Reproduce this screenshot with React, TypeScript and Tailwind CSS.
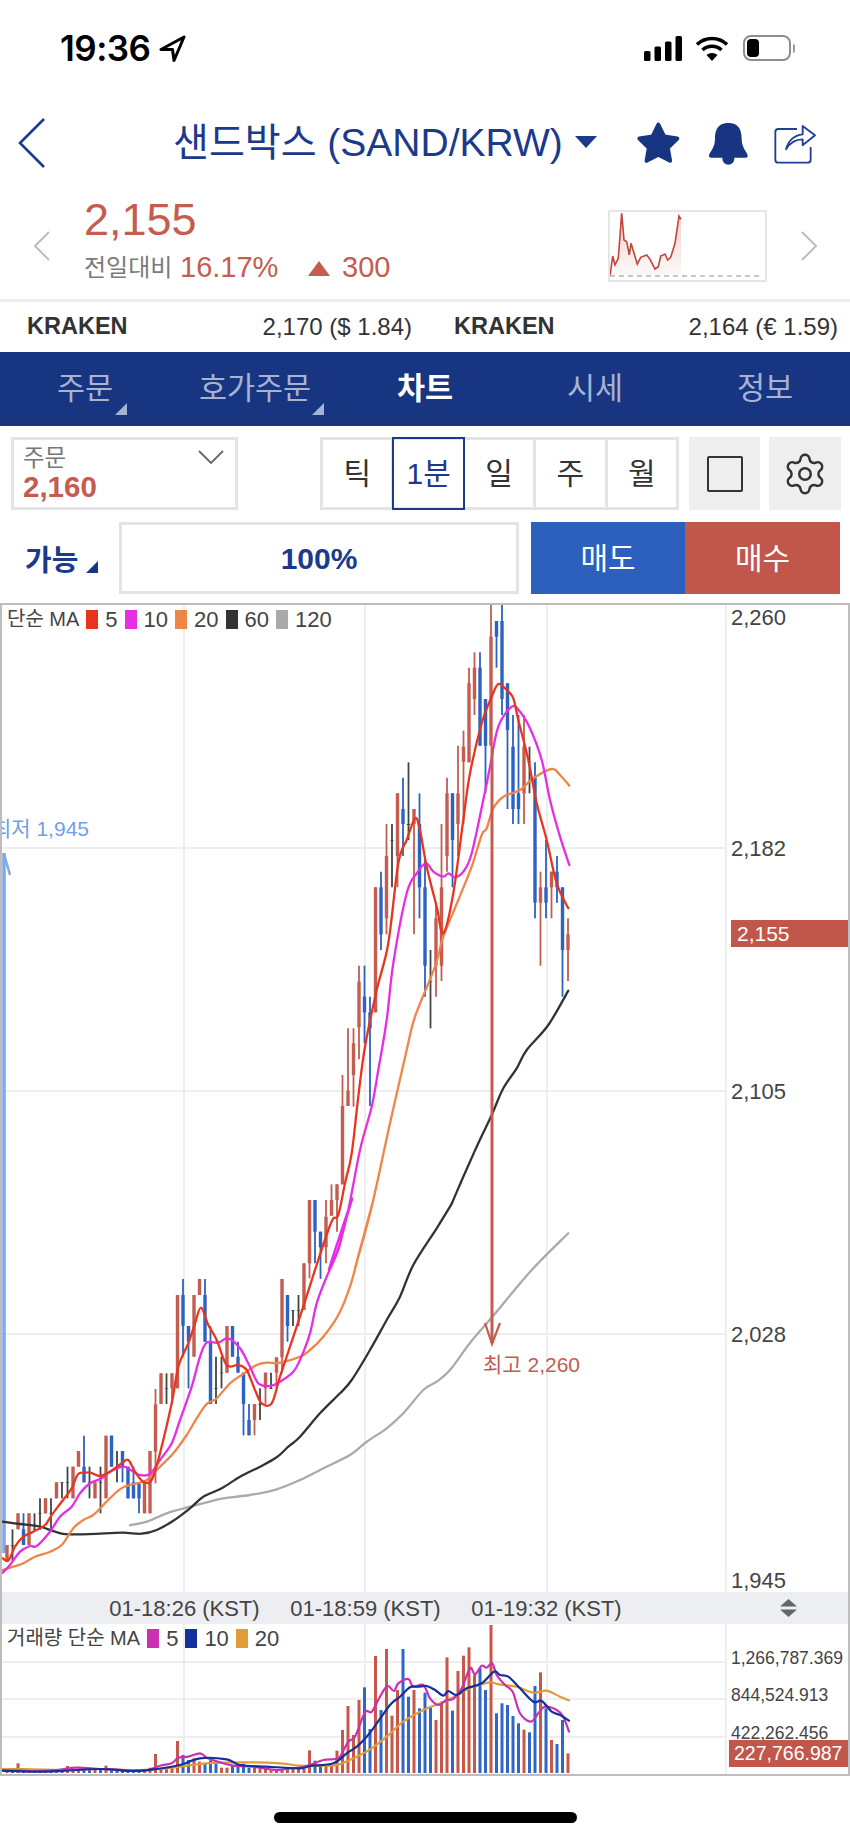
import { Settings } from "lucide-react";

// traced points: "x,y" read off a 3x crop whose corner sits at (ox, oy)
const trace = (ox: number, oy: number, pts: string) =>
  pts
    .split(" ")
    .map((p) => {
      const [x, y] = p.split(",").map(Number);
      return `${(ox + x / 3).toFixed(1)},${(oy + y / 3).toFixed(1)}`;
    })
    .join(" ");

// catmull-rom through the traced points, so the averages read as curves
const smooth = (pts: string) => {
  const p = pts.split(" ").map((s) => s.split(",").map(Number));
  let d = `M${p[0][0]} ${p[0][1]}`;
  for (let i = 0; i < p.length - 1; i++) {
    const a = p[Math.max(i - 1, 0)];
    const b = p[i];
    const c = p[i + 1];
    const e = p[Math.min(i + 2, p.length - 1)];
    const c1x = b[0] + (c[0] - a[0]) / 6;
    const c1y = b[1] + (c[1] - a[1]) / 6;
    const c2x = c[0] - (e[0] - b[0]) / 6;
    const c2y = c[1] - (e[1] - b[1]) / 6;
    d += `C${c1x.toFixed(1)} ${c1y.toFixed(1)} ${c2x.toFixed(1)} ${c2y.toFixed(1)} ${c[0]} ${c[1]}`;
  }
  return d;
};

const RED = "#c45c4f";
const BLUE = "#2d61c2";
const candleColor: Record<string, string> = { r: RED, b: BLUE, k: "#444444" };

// type, wick top, body top, body bottom, wick bottom; newest candle first, y = 600 + v / 3
const candles: [string, number, number, number, number][] = [
  ["r", 955, 1003, 1050, 1143], ["b", 862, 862, 1050, 1190], ["b", 768, 815, 862, 908], ["r", 815, 815, 862, 955],
  ["b", 720, 862, 908, 955], ["r", 815, 862, 908, 1097], ["b", 487, 533, 908, 955], ["k", 440, 485, 487, 580],
  ["r", 345, 440, 580, 672], ["b", 345, 580, 627, 672], ["b", 345, 440, 627, 672], ["b", 250, 250, 390, 627],
  ["b", 15, 63, 297, 345], ["b", 63, 63, 110, 203], ["r", 15, 110, 437, 437], ["b", 297, 297, 437, 580],
  ["b", 157, 203, 437, 437], ["r", 157, 203, 297, 345], ["r", 203, 250, 487, 487], ["r", 392, 440, 485, 672],
  ["r", 437, 580, 672, 768], ["b", 580, 580, 720, 862], ["r", 533, 580, 768, 815], ["r", 672, 862, 1097, 1143],
  ["r", 908, 955, 1097, 1190], ["k", 1050, 1143, 1145, 1285], ["b", 768, 862, 1097, 1190], ["b", 580, 672, 862, 955],
  ["r", 627, 627, 672, 1003], ["k", 487, 672, 675, 720], ["b", 533, 627, 672, 768], ["r", 580, 580, 768, 862],
  ["k", 672, 720, 722, 862], ["r", 672, 768, 955, 1003], ["b", 815, 862, 1003, 1050], ["r", 862, 862, 1237, 1237],
  ["b", 1190, 1237, 1285, 1518], ["b", 1097, 1190, 1237, 1330], ["r", 1097, 1145, 1282, 1378], ["r", 1285, 1330, 1425, 1520],
  ["r", 1285, 1472, 1518, 1518], ["r", 1425, 1518, 1753, 1753], ["r", 1753, 1753, 1800, 1895], ["r", 1753, 1800, 1847, 1847],
  ["r", 1800, 1850, 1942, 1990], ["b", 1895, 1895, 1942, 2037], ["b", 1800, 1800, 1895, 1990], ["r", 1800, 1800, 1990, 2035],
  ["r", 1990, 1990, 2130, 2130], ["k", 2085, 2130, 2132, 2178], ["k", 2130, 2130, 2132, 2178], ["b", 2085, 2085, 2178, 2225],
  ["r", 2037, 2037, 2272, 2318], ["r", 2272, 2272, 2318, 2365], ["k", 2318, 2365, 2367, 2367], ["r", 2318, 2318, 2365, 2412],
  ["k", 2365, 2412, 2414, 2460], ["r", 2412, 2412, 2460, 2506], ["b", 2412, 2460, 2506, 2506], ["b", 2318, 2318, 2412, 2506],
  ["b", 2225, 2270, 2318, 2318], ["b", 2178, 2178, 2270, 2270], ["r", 2178, 2178, 2318, 2318], ["k", 2270, 2318, 2320, 2365],
  ["k", 2270, 2365, 2367, 2412], ["b", 2178, 2225, 2412, 2412], ["b", 2037, 2085, 2225, 2225], ["r", 2037, 2037, 2085, 2085],
  ["r", 2085, 2085, 2270, 2270], ["b", 2178, 2178, 2225, 2365], ["b", 2037, 2085, 2177, 2270], ["r", 2085, 2085, 2365, 2365],
  ["r", 2320, 2320, 2365, 2412], ["k", 2320, 2365, 2367, 2412], ["r", 2320, 2320, 2412, 2412], ["r", 2367, 2413, 2555, 2650],
  ["r", 2553, 2553, 2740, 2740], ["r", 2647, 2647, 2740, 2740], ["b", 2647, 2647, 2695, 2740], ["b", 2600, 2647, 2695, 2695],
  ["b", 2600, 2600, 2695, 2695], ["b", 2553, 2553, 2600, 2647], ["k", 2553, 2600, 2602, 2647], ["b", 2507, 2507, 2600, 2600],
  ["r", 2507, 2507, 2695, 2695], ["k", 2600, 2647, 2649, 2740], ["r", 2647, 2647, 2695, 2695], ["k", 2600, 2647, 2649, 2695],
  ["b", 2507, 2600, 2647, 2647], ["r", 2553, 2553, 2600, 2600], ["r", 2600, 2600, 2695, 2695], ["k", 2600, 2647, 2649, 2695],
  ["k", 2647, 2647, 2649, 2695], ["r", 2647, 2647, 2695, 2695], ["k", 2695, 2740, 2742, 2790], ["r", 2695, 2695, 2740, 2740],
  ["k", 2695, 2740, 2742, 2790], ["k", 2740, 2788, 2790, 2790], ["r", 2740, 2740, 2835, 2835], ["b", 2740, 2788, 2835, 2835],
  ["r", 2740, 2740, 2788, 2788], ["k", 2788, 2835, 2837, 2882], ["r", 2835, 2835, 2882, 2882],
];

const volColors =
  "rbbrbrbbrbbbbbrbbrrrrbrrrbbbrbbrrrbrbbrrrrrrrbbrrrr" + "rrrrrrrbbbbrrbbbrrbbrrrrrrrbbbbbbrbrbbrrrbrbrbbrbrbr";
const volTops = [
  385, 285, 357, 345, 250, 142, 183, 322, 314, 295, 273, 240, 235, 265, 0, 195, 130, 150, 67, 92, 138, 257, 97, 230, 285,
  248, 203, 250, 195, 215, 72, 195, 272, 72, 255, 93, 312, 187, 225, 330, 243, 315, 377, 420, 420, 420, 407, 376, 432, 432,
  432, 430, 432, 435, 436, 430, 428, 428, 428, 416, 425, 420, 428, 428, 416, 406, 415, 410, 400, 405, 390, 348, 425, 430,
  432, 387, 428, 434, 436, 436, 436, 436, 436, 434, 422, 434, 432, 434, 432, 432, 432, 423, 435, 432, 436, 437, 437, 437,
  437, 435, 415, 436, 436,
];

const priceLines = [
  {
    color: "#aaaaaa",
    pts: [
      trace(0, 1250, "390,826 440,815 500,790 570,770 620,757 670,745"),
      trace(150, 1200, "300,885 380,868 450,840 520,805 600,765 650,725 710,685 760,640 820,570 860,545 900,510"),
      trace(290, 1020, "540,969 609,888 725,750 835,640"),
    ],
  },
  {
    color: "#333333",
    pts: [
      trace(0, 1250, "8,815 60,822 120,830 165,845 205,853 300,851 370,848 425,851 470,840 520,812 570,775 610,740 665,715 720,680 780,650 830,622 865,590 900,560"),
      trace(150, 1200, "510,640 570,580 605,540 660,450 710,360 750,290 790,195 860,85 900,20"),
      trace(290, 1020, "490,540 520,470 560,380 605,285 640,205 680,145"),
      trace(300, 600, "680,1350 745,1275 805,1172"),
    ],
  },
  {
    color: "#f0854a",
    pts: [
      trace(0, 1250, "8,960 40,950 70,940 105,920 150,905 185,885 220,835 250,810 280,795 310,765 340,735 370,712 410,700 440,690 480,650 520,610 560,555 590,505 620,462 650,445 690,400 725,375 770,345 800,338 840,338 900,320"),
      trace(150, 1200, "480,450 520,410 565,345 600,260 630,150 670,0"),
      trace(290, 1020, "195,745 245,560 300,310"),
      trace(300, 600, "320,1350 345,1250 405,1100 430,1010 475,900 515,800 545,705 560,685 580,625 610,590 660,570 700,535 755,507 780,525 808,557"),
    ],
  },
  {
    color: "#e62ee6",
    pts: [
      trace(0, 1250, "8,968 30,945 60,905 90,888 110,888 150,845 180,800 215,770 240,730 270,700 305,685 330,665 370,650 400,665 420,675 450,672 480,630 515,580 540,510 575,410 600,320 620,278 655,278 685,265 720,295 750,350 775,400 810,408 840,395 880,365 900,330"),
      trace(150, 1200, "480,400 500,310 530,230 565,150 585,70 605,0"),
      trace(290, 1020, "118,745 145,685 175,570 210,390 245,260 265,150 290,0"),
      trace(300, 600, "280,1090 320,880 350,820 378,790 400,815 430,830 445,820 465,832 490,815 515,760 555,575 570,500 595,380 635,320 660,335 690,385 725,480 750,600 780,710 808,795"),
    ],
  },
  {
    color: "#e8361e",
    pts: [
      trace(0, 1250, "8,925 25,932 45,890 70,860 100,845 135,825 155,795 185,755 215,715 235,672 270,668 300,678 330,665 365,640 385,630 405,665 430,695 455,690 480,610 515,460 535,350 565,280 585,220 603,173 625,225 650,270 680,345 715,345 740,360 765,420 785,460 815,460 840,380 870,290 900,200"),
      trace(290, 1020, "75,750 115,630 130,595 145,585 165,490 185,400 205,230 225,80"),
      trace(300, 600, "230,1170 265,1030 295,790 320,720 345,655 360,690 380,800 410,920 430,1000 460,880 490,660 510,520 545,370 575,290 595,252 620,270 640,295 655,360 685,480 710,610 740,720 770,850 805,925"),
    ],
  },
];

const volumeLines = [
  {
    color: "#e09c38",
    pts: [
      trace(0, 1625, "8,432 100,433 200,435 300,432 400,435 480,432 540,425 620,415 720,412 840,415 900,422"),
      trace(290, 1625, "90,422 140,420 200,395 245,370 290,335 340,290 400,255 450,235 500,212 545,187 600,172 625,178 680,185 730,203 770,197 810,215 837,226"),
    ],
  },
  {
    color: "#cc2fb0",
    pts: [
      trace(0, 1625, "8,437 60,437 100,438 170,435 230,428 300,432 380,436 440,436 480,422 515,415 535,398 565,395 600,385 620,398 660,412 700,422 760,425 830,435 870,430 900,428"),
      trace(290, 1625, "60,420 100,405 135,402 150,395 175,350 195,335 225,262 245,260 270,215 292,183 312,198 325,175 355,162 370,185 400,180 420,220 445,240 470,225 490,222 515,190 540,130 555,148 575,122 590,128 607,115 620,150 645,180 668,200 690,265 722,290 745,265 765,245 800,255 820,275 837,320"),
    ],
  },
  {
    color: "#14309c",
    pts: [
      trace(0, 1625, "8,437 100,440 180,438 300,432 400,438 470,432 540,420 600,400 680,403 720,420 800,425 900,430"),
      trace(290, 1625, "60,423 130,415 170,385 200,365 230,335 250,310 300,240 330,215 360,187 385,185 410,183 435,195 460,212 475,198 500,210 530,190 575,175 612,140 630,150 655,155 690,190 730,230 755,228 785,260 810,270 837,287"),
    ],
  },
];

const sparkline = "30,228 38,168 45,195 55,175 65,40 72,120 80,125 88,165 93,130 112,192 122,172 140,165 150,178 165,207 175,200 182,168 195,162 203,180 212,172 225,130 237,48 243,58";

function StatusBar() {
  return (
    <div className="h-[100px] flex items-start justify-between pt-[30px] pl-[60px] pr-[55px]">
      <div className="flex items-center h-[36px]">
        <span className="font-['Inter',sans-serif] text-[35px] leading-[36px] font-semibold text-black tracking-[-0.5px]">19:36</span>
        <svg width="27" height="27" viewBox="0 0 27 27" className="ml-[8px]">
          <path d="M25 2 2 14.5h11.5L15 25.5z" fill="none" stroke="#000" strokeWidth="3" strokeLinejoin="round" />
        </svg>
      </div>
      <div className="flex items-center h-[36px]">
        <svg width="38" height="25" viewBox="0 0 38 25" fill="#000">
          <rect x="0" y="15" width="6.5" height="10" rx="1.5" />
          <rect x="10.5" y="10.5" width="6.5" height="14.5" rx="1.5" />
          <rect x="21" y="5.5" width="6.5" height="19.5" rx="1.5" />
          <rect x="31.5" y="0" width="6.5" height="25" rx="1.5" />
        </svg>
        <svg width="34" height="25" viewBox="0 0 34 25" fill="none" stroke="#000" strokeWidth="3.6" className="ml-[13px]">
          <path d="M2 8.5c8.500-8 21.500-8 30 0" />
          <path d="M7.500 14c5.500-5 13.500-5 19 0" />
          <path d="M17 25l-5.500-6c3-2.800 8-2.800 11 0z" fill="#000" stroke="none" />
        </svg>
        <div className="ml-[14px] w-[48px] h-[26px] rounded-[8px] border-2 border-[#8e8e8e] p-[2px]">
          <div className="w-[12px] h-full rounded-[4px] bg-black" />
        </div>
        <div className="ml-[2px] w-[2px] h-[9px] rounded-r-sm bg-[#9a9a9a]" />
      </div>
    </div>
  );
}

function Header() {
  return (
    <div className="h-[86px] flex items-center text-[#1b3a8c]">
      <svg width="30" height="52" viewBox="0 0 30 52" fill="none" stroke="#1b3a8c" strokeWidth="2.6" className="ml-[17px]">
        <path d="M27 2 3 26l24 24" />
      </svg>
      <span className="w-[408px] ml-[126px] text-[39px] leading-[50px] whitespace-nowrap">샌드박스 (SAND/KRW)</span>
      <svg width="22" height="12" viewBox="0 0 22 12" className="-ml-[6px] -mt-[2px]">
        <path d="M0 0h22L11 12z" fill="#1b3a8c" />
      </svg>
      <svg width="47" height="45" viewBox="40 42 141 135" className="ml-[38px]">
        <path
          d="M110 53 127.600 88.700 167 94.500 138.500 122.300 145.300 161.500 110 143 74.700 161.500 81.500 122.300 53 94.500 92.400 88.700z"
          fill="#183582"
          stroke="#183582"
          strokeWidth="12"
          strokeLinejoin="round"
        />
      </svg>
      <svg width="47" height="45" viewBox="250 42 141 135" className="ml-[23px]" fill="#183582">
        <path d="M320 48C285 48 280 75 280 95c0 30-18 40-18 52 0 3 2 5 6 5h104c4 0 6-2 6-5 0-12-18-22-18-52 0-20-5-47-40-47z" />
        <circle cx="320" cy="155" r="18" />
      </svg>
      <svg width="47" height="45" viewBox="450 45 141 135" className="ml-[19px]" fill="none" stroke="#1f4096" strokeWidth="5.500" strokeLinejoin="round">
        <path d="M528 69H472q-9 0-9 9v83q0 9 9 9h88q9 0 9-9v-38" />
        <path d="M495 130c8-30 25-42 50-45V60l37 28-37 30v-18c-20 0-38 10-50 30z" />
      </svg>
    </div>
  );
}

function PriceSummary() {
  return (
    <div className="h-[113px] flex items-start">
      <svg width="18" height="30" viewBox="0 0 18 30" fill="none" stroke="#bdbdbd" strokeWidth="2" className="ml-[33px] mt-[45px]">
        <path d="M16 1 2 15l14 14" />
      </svg>
      <div className="ml-[33px] mt-[9px] w-[524px]">
        <div className="text-[45px] leading-[50px] text-[#c45c4f]">2,155</div>
        <div className="mt-[4px] flex items-center h-[38px] text-[29px] text-[#c45c4f]">
          <span className="text-[24px] text-[#7a7a7a] w-[96px] whitespace-nowrap">전일대비</span>
          <span className="w-[128px]">16.17%</span>
          <svg width="22" height="15" viewBox="0 0 22 15">
            <path d="M11 0 22 15H0z" fill="#c45c4f" />
          </svg>
          <span className="ml-[12px]">300</span>
        </div>
      </div>
      <div className="mt-[24px] w-[159px] h-[72px] border-2 border-[#e6e6e6]">
        <svg width="155" height="68" viewBox="610 212 155 68">
          <defs>
            <linearGradient id="spark" x1="0" y1="0" x2="0" y2="1">
              <stop offset="0" stopColor="#c45c4f" stopOpacity="0.3" />
              <stop offset="1" stopColor="#c45c4f" stopOpacity="0.03" />
            </linearGradient>
          </defs>
          <polygon points={`610,276 ${trace(600, 200, sparkline)} 681,276`} fill="url(#spark)" />
          <polyline points={trace(600, 200, sparkline)} fill="none" stroke="#c0453a" strokeWidth="1.600" />
          <line x1="610" y1="276" x2="762" y2="276" stroke="#b5b5b5" strokeWidth="1.500" strokeDasharray="5 4" />
        </svg>
      </div>
      <svg width="18" height="30" viewBox="0 0 18 30" fill="none" stroke="#bdbdbd" strokeWidth="2" className="ml-[33px] mt-[45px]">
        <path d="M2 1l14 14L2 29" />
      </svg>
    </div>
  );
}

function ExchangeRow() {
  return (
    <div className="h-[53px] border-t-[3px] border-[#eeeeee] pl-[27px] pr-[12px] flex items-center gap-[42px] text-[24px] text-[#333333]">
      <div className="w-[385px] flex justify-between">
        <span className="font-bold text-[23.500px]">KRAKEN</span>
        <span>2,170 ($ 1.84)</span>
      </div>
      <div className="w-[384px] flex justify-between">
        <span className="font-bold text-[23.500px]">KRAKEN</span>
        <span>2,164 (€ 1.59)</span>
      </div>
    </div>
  );
}

function Corner({ className, fill }: { className: string; fill: string }) {
  return (
    <svg width="12" height="12" viewBox="0 0 12 12" className={className}>
      <path d="M12 0v12H0z" fill={fill} />
    </svg>
  );
}

function Tabs() {
  return (
    <div className="h-[74px] bg-[#183582] flex text-[30.500px] text-[#a6b3d3]">
      <div className="relative w-[170px] flex items-center justify-center">
        주문
        <Corner className="absolute left-[115px] top-[51px]" fill="#a6b3d3" />
      </div>
      <div className="relative w-[170px] flex items-center justify-center">
        호가주문
        <Corner className="absolute left-[142px] top-[51px]" fill="#a6b3d3" />
      </div>
      <div className="w-[170px] flex items-center justify-center font-bold text-white">차트</div>
      <div className="w-[170px] flex items-center justify-center">시세</div>
      <div className="w-[170px] flex items-center justify-center">정보</div>
    </div>
  );
}

function Controls() {
  return (
    <div className="pt-[11px]">
      <div className="h-[73px] pl-[11px] flex">
        <div className="relative w-[227px] border-[3px] border-[#e4e4e4] pl-[9px] pt-[4px]">
          <div className="text-[23.500px] leading-[28px] text-[#777777]">주문</div>
          <div className="text-[29.500px] leading-[30px] font-bold text-[#c45c4f]">2,160</div>
          <svg width="26" height="14" viewBox="0 0 26 14" fill="none" stroke="#666666" strokeWidth="1.800" className="absolute right-[11px] top-[10px]">
            <path d="M1 1l12 12L25 1" />
          </svg>
        </div>
        <div className="ml-[82px] w-[359px] border-[3px] border-[#e4e4e4] flex text-[30px] text-[#333333]">
          <div className="flex-1 flex items-center justify-center border-r-[3px] border-[#e4e4e4]">틱</div>
          <div className="flex-1 -my-[3px] -ml-[2px] flex items-center justify-center border-[2.500px] border-[#1b3a8c] text-[#1b3a8c]">1분</div>
          <div className="flex-1 flex items-center justify-center border-r-[3px] border-[#e4e4e4]">일</div>
          <div className="flex-1 flex items-center justify-center border-r-[3px] border-[#e4e4e4]">주</div>
          <div className="flex-1 flex items-center justify-center">월</div>
        </div>
        <div className="ml-[10px] w-[71px] bg-[#eeeeee] flex items-center justify-center">
          <div className="w-[36px] h-[36px] border-[2.500px] border-[#333333] rounded-[2px]" />
        </div>
        <div className="ml-[9px] w-[72px] bg-[#eeeeee] flex items-center justify-center">
          <Settings size={46} strokeWidth={1.300} color="#333333" />
        </div>
      </div>
      <div className="mt-[12px] h-[72px] flex">
        <div className="w-[119px] pl-[25px] flex items-center">
          <span className="mt-[8px] text-[29px] font-bold text-[#1b3a8c] whitespace-nowrap">가능</span>
          <Corner className="ml-[8px] mt-[18px]" fill="#183582" />
        </div>
        <div className="w-[400px] border-[3px] border-[#e4e4e4] flex items-center justify-center text-[30px] font-bold text-[#1b3a8c]">100%</div>
        <div className="ml-[12px] w-[154px] bg-[#2d5fbd] flex items-center justify-center text-[30px] text-white">매도</div>
        <div className="w-[155px] bg-[#c1574b] flex items-center justify-center text-[30px] text-white">매수</div>
      </div>
    </div>
  );
}

function Legend({ label, items }: { label: string; items: { color: string; text: string }[] }) {
  return (
    <div className="absolute left-[5px] top-0 h-[28px] flex items-center gap-[7px] text-[20px] text-[#444444] whitespace-nowrap">
      <span>{label}</span>
      {items.map((item) => (
        <div key={item.text} className="flex items-center gap-[7px]">
          <span className={`w-[12px] h-[19px] ${item.color}`} />
          <span className="text-[22px]">{item.text}</span>
        </div>
      ))}
    </div>
  );
}

function Chart() {
  return (
    <div className="mt-[9px] h-[1173px] border-2 border-[#bdbdbd]">
      <div className="relative h-[987px]">
        <svg width="846" height="987" viewBox="2 605 846 987" className="block">
          {[848, 1091, 1334].map((y) => (
            <line key={y} x1="2" x2="726" y1={y} y2={y} stroke="#eeeeee" strokeWidth="2" />
          ))}
          {[184, 365, 547, 726].map((x) => (
            <line key={x} x1={x} x2={x} y1="605" y2="1592" stroke="#eeeeee" strokeWidth="2" />
          ))}
          <line x1="4" x2="4" y1="853" y2="1553" stroke="#7ea7ec" strokeWidth="3.500" />
          <polyline points="4,854 10,875" fill="none" stroke="#7ea7ec" strokeWidth="2.500" />
          {candles.map(([type, wickTop, top, bottom, wickBottom], i) => {
            const x = 568 - 5.5 * i;
            const color = candleColor[type];
            return (
              <g key={i}>
                <line x1={x} x2={x} y1={600 + wickTop / 3} y2={600 + wickBottom / 3} stroke={color} strokeWidth="1.800" />
                <rect x={x - 1.7} width="3.400" y={600 + top / 3} height={(bottom - top) / 3} fill={color} />
              </g>
            );
          })}
          {priceLines.map((line) => (
            <path
              key={line.color}
              d={smooth(line.pts.join(" "))}
              fill="none"
              stroke={line.color}
              strokeWidth="2.300"
              strokeLinejoin="round"
              strokeLinecap="round"
            />
          ))}
          <line x1="492" x2="492" y1="746" y2="1343" stroke={RED} strokeWidth="3" />
          <polyline points="485,1323 492,1344 500,1323" fill="none" stroke={RED} strokeWidth="2.200" />
          <text x="89" y="836" textAnchor="end" fontSize="21" fill="#6f9fe8">최저 1,945</text>
          <text x="483" y="1372" fontSize="21" fill="#c45c4f">최고 2,260</text>
          <g fontSize="22" fill="#444444">
            <text x="731" y="625">2,260</text>
            <text x="731" y="856">2,182</text>
            <text x="731" y="1099">2,105</text>
            <text x="731" y="1342">2,028</text>
            <text x="731" y="1588">1,945</text>
          </g>
        </svg>
        <Legend
          label="단순 MA"
          items={[
            { color: "bg-[#e8341c]", text: "5" },
            { color: "bg-[#e62ee6]", text: "10" },
            { color: "bg-[#f0854a]", text: "20" },
            { color: "bg-[#333333]", text: "60" },
            { color: "bg-[#aaaaaa]", text: "120" },
          ]}
        />
        <div className="absolute right-0 top-[315px] w-[117px] h-[27px] bg-[#c1574b] pl-[6px] text-[21px] leading-[27px] text-white">2,155</div>
      </div>
      <div className="h-[32px] bg-[#eceef2] pl-[92px] flex items-center text-[22px] text-[#444444] whitespace-nowrap">
        <span className="w-[181px] text-center">01-18:26 (KST)</span>
        <span className="w-[181px] text-center">01-18:59 (KST)</span>
        <span className="w-[181px] text-center">01-19:32 (KST)</span>
        <svg width="17" height="18" viewBox="0 0 17 18" fill="#666666" className="ml-[143px]">
          <path d="M8.500 0 17 7.500H0z" />
          <path d="M8.500 18 0 10.500h17z" />
        </svg>
      </div>
      <div className="relative h-[150px]">
        <svg width="846" height="150" viewBox="2 1624 846 150" className="block">
          {[1662, 1699, 1737].map((y) => (
            <line key={y} x1="2" x2="726" y1={y} y2={y} stroke="#eeeeee" strokeWidth="2" />
          ))}
          {[184, 365, 547, 726].map((x) => (
            <line key={x} x1={x} x2={x} y1="1624" y2="1774" stroke="#eeeeee" strokeWidth="2" />
          ))}
          {volTops.map((top, i) => (
            <rect
              key={i}
              x={566.5 - 5.5 * i}
              width="3"
              y={1625 + top / 3}
              height={148 - top / 3}
              fill={volColors[i] === "r" ? "#c8574a" : "#2f66c8"}
            />
          ))}
          {volumeLines.map((line) => (
            <path
              key={line.color}
              d={smooth(line.pts.join(" "))}
              fill="none"
              stroke={line.color}
              strokeWidth="2.200"
              strokeLinejoin="round"
              strokeLinecap="round"
            />
          ))}
          <g fontSize="17.500" fill="#444444">
            <text x="731" y="1664">1,266,787.369</text>
            <text x="731" y="1701">844,524.913</text>
            <text x="731" y="1739">422,262.456</text>
          </g>
        </svg>
        <Legend
          label="거래량 단순 MA"
          items={[
            { color: "bg-[#cc2fb0]", text: "5" },
            { color: "bg-[#14309c]", text: "10" },
            { color: "bg-[#e09c38]", text: "20" },
          ]}
        />
        <div className="absolute right-0 top-[116px] w-[119px] h-[27px] bg-[#c1574b] pl-[5px] text-[19.500px] leading-[27px] text-white whitespace-nowrap">227,766.987</div>
      </div>
    </div>
  );
}

export default function App() {
  return (
    <div className="w-[850px] h-[1841px] bg-white overflow-hidden font-['Liberation_Sans','Noto_Sans_CJK_KR',sans-serif]">
      <StatusBar />
      <Header />
      <PriceSummary />
      <ExchangeRow />
      <Tabs />
      <Controls />
      <Chart />
      <div className="pt-[36px] flex justify-center">
        <div className="w-[303px] h-[11px] rounded-full bg-black" />
      </div>
    </div>
  );
}
